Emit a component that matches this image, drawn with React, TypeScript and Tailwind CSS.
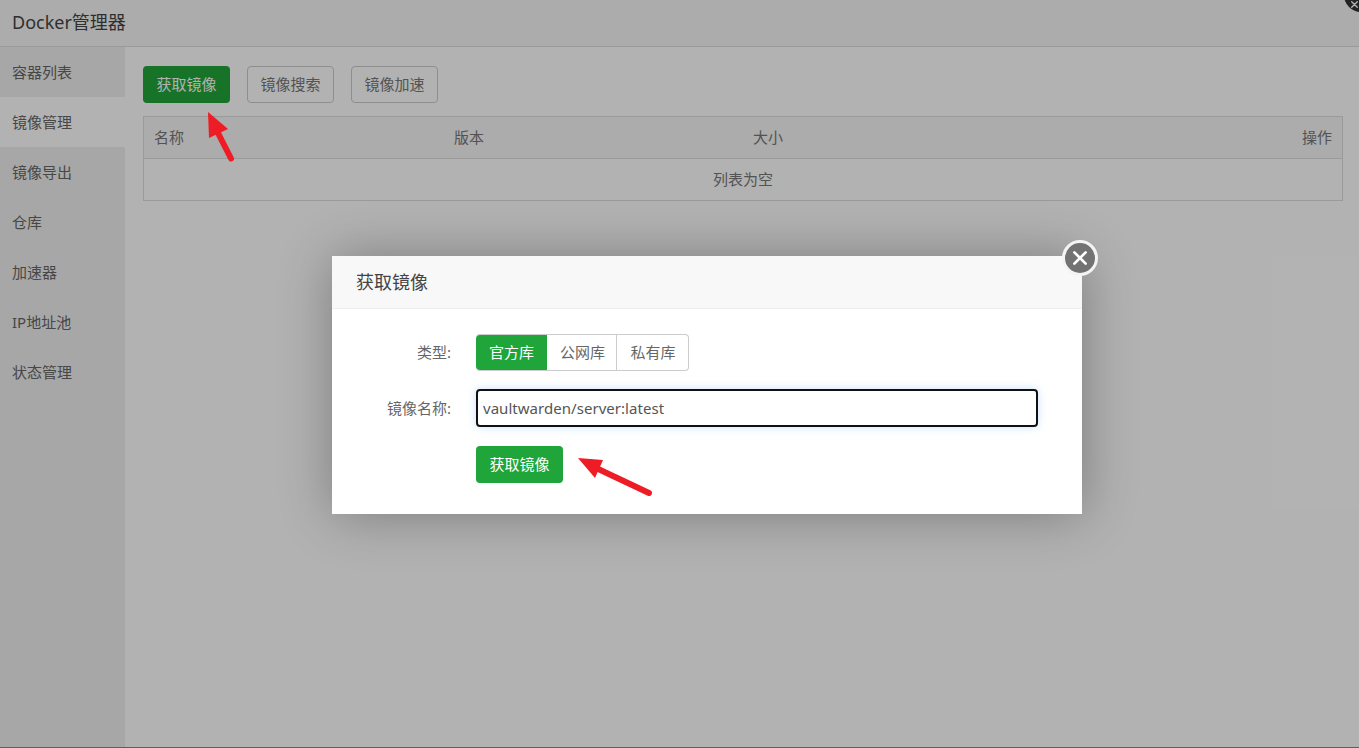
import React from 'react';

const FONT = "font-['Noto_Sans','Noto_Sans_CJK_SC',sans-serif]";

const SIDE_ITEMS = ['容器列表', '镜像管理', '镜像导出', '仓库', '加速器', 'IP地址池', '状态管理'];

function CloseIcon({ size }: { size: number }) {
  return (
    <svg width={size} height={size} viewBox="0 0 16 16" fill="none" stroke="#fff" strokeWidth="2.4" strokeLinecap="round">
      <path d="M3 3 L13 13 M13 3 L3 13" />
    </svg>
  );
}

function Sidebar() {
  return (
    <div className="w-[125px] shrink-0 bg-[#f0f0f0]">
      {SIDE_ITEMS.map((item) => (
        <div
          key={item}
          className={`h-[50px] pl-3 flex items-center text-[15px] text-[#666] ${item === '镜像管理' ? 'bg-white' : ''}`}
        >
          {item}
        </div>
      ))}
    </div>
  );
}

function ImageTable() {
  return (
    <div className="mt-[13px] w-[1200px] border border-[#ddd] text-[15px] text-[#777]">
      <div className="h-[42px] flex items-center bg-[#f6f6f6] border-b border-[#ddd]">
        <div className="w-[299px] pl-[10px]">名称</div>
        <div className="w-[299px] pl-[11px]">版本</div>
        <div className="w-[299px] pl-[11px]">大小</div>
        <div className="flex-1 text-right pr-[10px]">操作</div>
      </div>
      <div className="h-[41px] flex items-center justify-center">列表为空</div>
    </div>
  );
}

function PullDialog() {
  return (
    <div className="absolute left-[332px] top-[256px] w-[750px] h-[258px] bg-white shadow-[1px_1px_50px_rgba(0,0,0,0.3)]">
      <div className="h-[53px] pl-[24px] flex items-center bg-[#f8f8f8] border-b border-[#eee] text-[18px] text-[#444]">
        获取镜像
      </div>
      <div className="pt-[25px] text-[15px] text-[#666]">
        <div className="flex items-center h-[37px]">
          <div className="w-[119px] text-right">类型:</div>
          <div className="ml-[25px] flex h-[37px] rounded-[4px] border border-[#ccc] border-l-0">
            <div className="w-[71px] flex items-center justify-center bg-[#20a53a] text-white rounded-l-[4px]">官方库</div>
            <div className="w-[70px] pl-[2px] flex items-center justify-center text-[#666] border-r border-[#ccc]">公网库</div>
            <div className="w-[71px] pl-[1px] flex items-center justify-center text-[#666]">私有库</div>
          </div>
        </div>
        <div className="flex items-center mt-[18px] h-[38px]">
          <div className="w-[119px] text-right">镜像名称:</div>
          <input
            readOnly
            value="vaultwarden/server:latest"
            className={`${FONT} ml-[25px] w-[562px] h-[38px] px-[5px] rounded-[4px] border-2 border-[#111] text-[15px] text-[#555] tracking-[0.04px] outline-none shadow-[0_0_8px_rgba(150,200,250,0.5)]`}
          />
        </div>
        <button className={`${FONT} block ml-[144px] mt-[19px] w-[87px] h-[37px] rounded-[4px] bg-[#20a53a] text-white text-[15px]`}>
          获取镜像
        </button>
      </div>
      <div className="absolute -top-[16px] -right-[16px] w-[36px] h-[36px] rounded-full bg-[#737373] border-[3px] border-[#f4f4f4] flex items-center justify-center">
        <CloseIcon size={18} />
      </div>
    </div>
  );
}

export default function App() {
  return (
    <div className={`${FONT} relative w-[1359px] h-[748px] overflow-hidden bg-white`}>
      <div className="h-[47px] pl-3 pb-[2px] flex items-center bg-[#f6f6f6] border-b border-[#ddd] text-[18px] text-[#444]">
        Docker管理器
      </div>
      <div className="flex h-[701px]">
        <Sidebar />
        <div className="pl-[18px] pt-[19px]">
          <div className="flex gap-[17px] text-[15px]">
            <button className="w-[87px] h-[37px] rounded-[4px] bg-[#20a53a] text-white">获取镜像</button>
            <button className="w-[87px] h-[37px] rounded-[4px] border border-[#ccc] text-[#777]">镜像搜索</button>
            <button className="w-[87px] h-[37px] rounded-[4px] border border-[#ccc] text-[#777]">镜像加速</button>
          </div>
          <ImageTable />
        </div>
      </div>

      {/* outer window close button, mostly off-screen */}
      <div className="absolute -top-[22px] -right-[19px] w-[34px] h-[34px] rounded-full bg-[#333] flex items-end justify-start pl-[6px] pb-[3px]">
        <CloseIcon size={9} />
      </div>

      {/* layer mask */}
      <div className="absolute inset-0 bg-black/30" />
      <div className="absolute left-0 right-0 bottom-0 h-px bg-[#5f5f5f]" />

      <PullDialog />

      {/* annotation arrows */}
      <svg className="absolute left-0 top-0 pointer-events-none" width="1359" height="748" viewBox="0 0 1359 748">
        <path d="M208 112 L228 129 L209 138 Z" fill="#ee1c25" />
        <path d="M217 131 L231 158.500" stroke="#ee1c25" strokeWidth="6" strokeLinecap="round" />
        <path d="M578 458 L603 460 L595 478 Z" fill="#ee1c25" />
        <path d="M594 467 L649 493" stroke="#ee1c25" strokeWidth="6" strokeLinecap="round" />
      </svg>
    </div>
  );
}
